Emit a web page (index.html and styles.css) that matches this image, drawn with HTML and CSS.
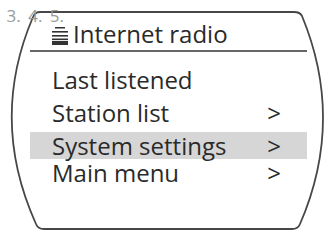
FILE: index.html
```html
<!DOCTYPE html>
<html lang="en">
<head>
    <meta charset="UTF-8">
    <meta name="viewport" content="width=device-width, initial-scale=1.0">
    <title>Internet radio</title>
    <link rel="stylesheet" href="styles.css">
</head>
<body>
    <div class="display">
        <svg class="frame" width="329" height="234" viewBox="0 0 329 234">
            <path d="M40 12 L294 12 Q300 12 302 16 Q345 120 300 224 Q298 229 292 229 L44 229 Q38 229 36 224 Q-11 120 33 17 Q35 12 40 12 Z" />
        </svg>
        <div class="steps">2. 3. 4. 5.</div>

        <div class="screen">
            <div class="title">
                <svg class="icon" width="16" height="20" viewBox="0 0 16 20">
                    <rect x="3" y="2" width="10" height="1.5" />
                    <rect x="0" y="6" width="16" height="1.6" />
                    <rect x="0" y="10" width="16" height="1.6" />
                    <rect x="0" y="13.5" width="16" height="1.6" />
                    <rect x="0" y="16" width="16" height="4" />
                </svg>
                <span>Internet radio</span>
            </div>

            <div class="menu">
                <div class="item">Last listened</div>
                <div class="item">Station list <span class="arrow">&gt;</span></div>
                <div class="item active">System settings <span class="arrow">&gt;</span></div>
                <div class="item">Main menu <span class="arrow">&gt;</span></div>
            </div>
        </div>
    </div>
</body>
</html>
```

FILE: styles.css
```css
body {
    margin: 0;
    background: #fff;
    font-family: 'Open Sans', 'Noto Sans', sans-serif;
    color: #2a2a2a;
}
.display {
    position: relative;
    width: 329px;
    height: 234px;
    overflow: hidden;
}
.frame {
    position: absolute;
    left: 0;
    top: 0;
}
.frame path {
    fill: none;
    stroke: #474747;
    stroke-width: 1.8;
}
.steps {
    position: absolute;
    right: 265px;
    top: 4px;
    font-size: 17px;
    word-spacing: 3px;
    color: #9a9a9a;
    white-space: nowrap;
}
.screen {
    width: 277px;
    margin-left: 30px;
    padding-top: 17px;
}
.title {
    display: flex;
    align-items: center;
    gap: 5px;
    height: 33px;
    padding-left: 22px;
    border-bottom: 2px solid #666;
    font-size: 24px;
}
.icon {
    fill: #333;
    margin-top: 2px;
}
.menu {
    margin-top: 14px;
}
.item {
    display: flex;
    height: 27px;
    line-height: 27px;
    padding-left: 22px;
    padding-right: 26px;
    font-size: 24px;
}
.item + .item {
    margin-top: 6px;
}
.item.active {
    background: #d6d6d6;
}
.item.active + .item {
    margin-top: 0;
}
.arrow {
    margin-left: auto;
}
```
